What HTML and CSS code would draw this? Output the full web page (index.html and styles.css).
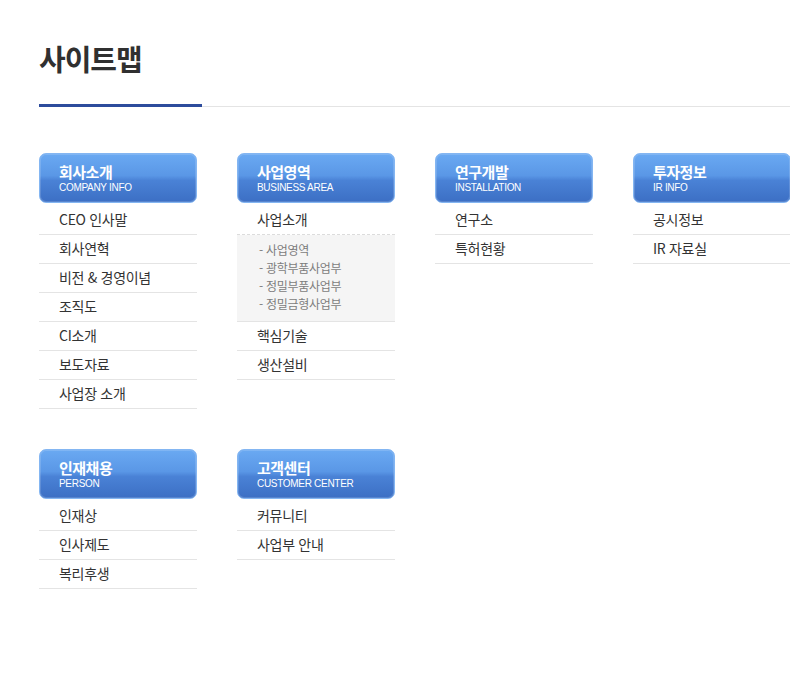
FILE: index.html
```html
<!DOCTYPE html>
<html lang="ko">
<head>
  <meta charset="UTF-8">
  <title>사이트맵</title>
  <link rel="stylesheet" href="styles.css">
</head>
<body>

  <h1 class="page-title">사이트맵</h1>
  <div class="divider">
    <div class="divider-blue"></div>
    <div class="divider-gray"></div>
  </div>

  <div class="sitemap">
    <div class="group">
      <div class="group-head">
        <strong>회사소개</strong>
        <span>COMPANY INFO</span>
      </div>
      <ul class="menu">
        <li>CEO 인사말</li>
        <li>회사연혁</li>
        <li>비전 &amp; 경영이념</li>
        <li>조직도</li>
        <li>CI소개</li>
        <li>보도자료</li>
        <li>사업장 소개</li>
      </ul>
    </div>

    <div class="group">
      <div class="group-head">
        <strong>사업영역</strong>
        <span>BUSINESS AREA</span>
      </div>
      <ul class="menu">
        <li class="has-sub">사업소개</li>
        <li class="sub">
          <ul>
            <li>- 사업영역</li>
            <li>- 광학부품사업부</li>
            <li>- 정밀부품사업부</li>
            <li>- 정밀금형사업부</li>
          </ul>
        </li>
        <li>핵심기술</li>
        <li>생산설비</li>
      </ul>
    </div>

    <div class="group">
      <div class="group-head">
        <strong>연구개발</strong>
        <span>INSTALLATION</span>
      </div>
      <ul class="menu">
        <li>연구소</li>
        <li>특허현황</li>
      </ul>
    </div>

    <div class="group">
      <div class="group-head">
        <strong>투자정보</strong>
        <span>IR INFO</span>
      </div>
      <ul class="menu">
        <li>공시정보</li>
        <li>IR 자료실</li>
      </ul>
    </div>

    <div class="group">
      <div class="group-head">
        <strong>인재채용</strong>
        <span>PERSON</span>
      </div>
      <ul class="menu">
        <li>인재상</li>
        <li>인사제도</li>
        <li>복리후생</li>
      </ul>
    </div>

    <div class="group">
      <div class="group-head">
        <strong>고객센터</strong>
        <span>CUSTOMER CENTER</span>
      </div>
      <ul class="menu">
        <li>커뮤니티</li>
        <li>사업부 안내</li>
      </ul>
    </div>
  </div>

</body>
</html>
```

FILE: styles.css
```css
html, body {
  overflow-x: hidden;
}

body {
  margin: 0;
  padding: 37px 0 40px 39px;
  background: #fff;
  color: #333;
  font-family: "Noto Sans CJK KR", "Noto Sans", sans-serif;
}

.page-title {
  margin: 0;
  font-size: 29px;
  line-height: 42px;
  font-weight: bold;
  color: #303030;
  letter-spacing: -1px;
}

.divider {
  display: flex;
  align-items: flex-end;
  margin-top: 25px;
}

.divider-blue {
  width: 163px;
  height: 3px;
  background: #2d4c9c;
}

.divider-gray {
  flex: 1;
  height: 1px;
  background: #e4e4e4;
}

.sitemap {
  display: grid;
  grid-template-columns: repeat(4, 158px);
  column-gap: 40px;
  row-gap: 40px;
  margin-top: 46px;
}

.group-head {
  height: 50px;
  box-sizing: border-box;
  padding: 10px 0 0 19px;
  border: 1px solid #84b6f2;
  border-radius: 7px;
  background: linear-gradient(to bottom, #6aa9f2 0%, #5a97e6 45%, #4a82d6 55%, #3c6fc4 100%);
  box-shadow: inset 0 0 0 1px rgba(255,255,255,0.15);
  color: #fff;
  font-family: "Liberation Sans", "Noto Sans CJK KR", sans-serif;
}

.group-head strong {
  display: block;
  font-size: 15px;
  line-height: 18px;
  font-weight: bold;
  letter-spacing: -0.5px;
}

.group-head span {
  display: block;
  font-size: 10px;
  line-height: 12px;
  letter-spacing: -0.3px;
}

.menu {
  list-style: none;
  margin: 0;
  padding: 3px 0 0;
}

.menu > li {
  height: 26px;
  line-height: 26px;
  padding: 0 0 2px 20px;
  border-bottom: 1px solid #e4e4e4;
  font-size: 14px;
  color: #333;
  letter-spacing: -0.3px;
}

.menu > li.has-sub {
  border-bottom: 1px dashed #dcdcdc;
}

.menu > li.sub {
  height: auto;
  padding: 6px 0 8px 22px;
  background: #f5f5f5;
}

.sub ul {
  list-style: none;
  margin: 0;
  padding: 0;
}

.sub li {
  height: 18px;
  line-height: 18px;
  font-size: 12px;
  color: #7d7d7d;
}
```
